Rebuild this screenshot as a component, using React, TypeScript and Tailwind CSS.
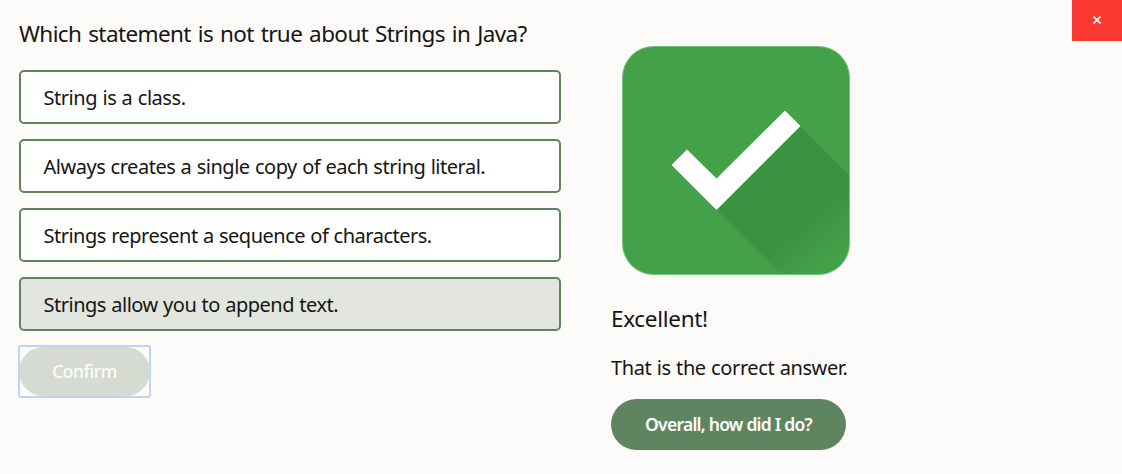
type Option = { text: string; selected?: boolean; tracking: string };

const options: Option[] = [
  { text: "String is a class.", tracking: "tracking-[-0.45px]" },
  { text: "Always creates a single copy of each string literal.", tracking: "tracking-[-0.48px]" },
  { text: "Strings represent a sequence of characters.", tracking: "tracking-[-0.5px]" },
  { text: "Strings allow you to append text.", selected: true, tracking: "tracking-[-0.49px]" },
];

function CheckBadge() {
  return (
    <svg viewBox="0 0 228 229" className="block h-[229px] w-[228px]" aria-hidden="true">
      <defs>
        <clipPath id="tile">
          <rect x="0.5" y="0.5" width="227" height="228" rx="31" />
        </clipPath>
        <linearGradient id="shade" gradientUnits="userSpaceOnUse" x1="178" y1="178" x2="208" y2="214">
          <stop offset="0" stopColor="#3d9142" />
          <stop offset="1" stopColor="#43a149" />
        </linearGradient>
      </defs>
      <rect x="0.5" y="0.5" width="227" height="228" rx="31" fill="#43a149" />
      <path d="M94.5 163.500L178 80L298 200V284H215Z" fill="url(#shade)" clipPath="url(#tile)" />
      <rect x="0.5" y="0.5" width="227" height="228" rx="31" fill="none" stroke="#76c47a" />
      <path d="M49.500 119L65 103.500L94.500 132.500L163 64.500L178.500 80L94.500 164Z" fill="#fff" />
    </svg>
  );
}

export default function App() {
  return (
    <div className="flex h-[474px] w-[1122px] items-start overflow-hidden bg-[#fcfbfa] font-['Noto_Sans',sans-serif] whitespace-nowrap text-[#161513]">
      <main className="ml-[19px] w-[542px] pt-[18px]">
        <h1 className="text-[22.5px] leading-[32px] tracking-[-0.6px] [word-spacing:1.6px]">
          Which statement is not true about Strings in Java?
        </h1>
        <div className="mt-5 flex flex-col gap-[15px]">
          {options.map((o) => (
            <button
              key={o.text}
              className={`flex h-[54px] items-center rounded-[5px] border-2 border-[#5f8560] pt-[2px] pl-[22.500px] text-left text-[20px] [word-spacing:0.6px] ${o.tracking} ${o.selected ? "bg-[#e2e6df]" : "bg-white"}`}
            >
              {o.text}
            </button>
          ))}
        </div>
        <div className="mt-[14px] -ml-px flex h-[53px] w-[133px] rounded-[3px] border-2 border-[#bfd4ee]">
          <button disabled className="-mx-px h-[49px] grow rounded-full bg-[#d6dbd1] text-[17.5px] font-medium tracking-[-0.45px] text-[#fcfbfa]">
            Confirm
          </button>
        </div>
      </main>
      <section className="ml-[50px] flex w-[461px] flex-col items-start pt-[46px]">
        <div className="ml-[11px]">
          <CheckBadge />
        </div>
        <h2 className="mt-7 text-[22.5px] leading-[32px] tracking-[-0.3px]">Excellent!</h2>
        <p className="mt-[19px] text-[20px] leading-[28px] tracking-[-0.4px] [word-spacing:0.6px]">That is the correct answer.</p>
        <button className="mt-[17px] h-[51px] w-[235px] rounded-full bg-[#5f8560] text-[17.5px] font-semibold tracking-[-0.75px] text-white">
          Overall, how did I do?
        </button>
      </section>
      <button aria-label="Close" className="flex h-[41px] w-[50px] items-center justify-center bg-[#fa3a32] pb-[2px] text-white">
        <svg viewBox="0 0 8 8" className="h-2 w-2" fill="none" stroke="currentColor" strokeWidth="1.600">
          <path d="M0.500 0.500L7.500 7.500M7.500 0.500L0.500 7.500" />
        </svg>
      </button>
    </div>
  );
}
